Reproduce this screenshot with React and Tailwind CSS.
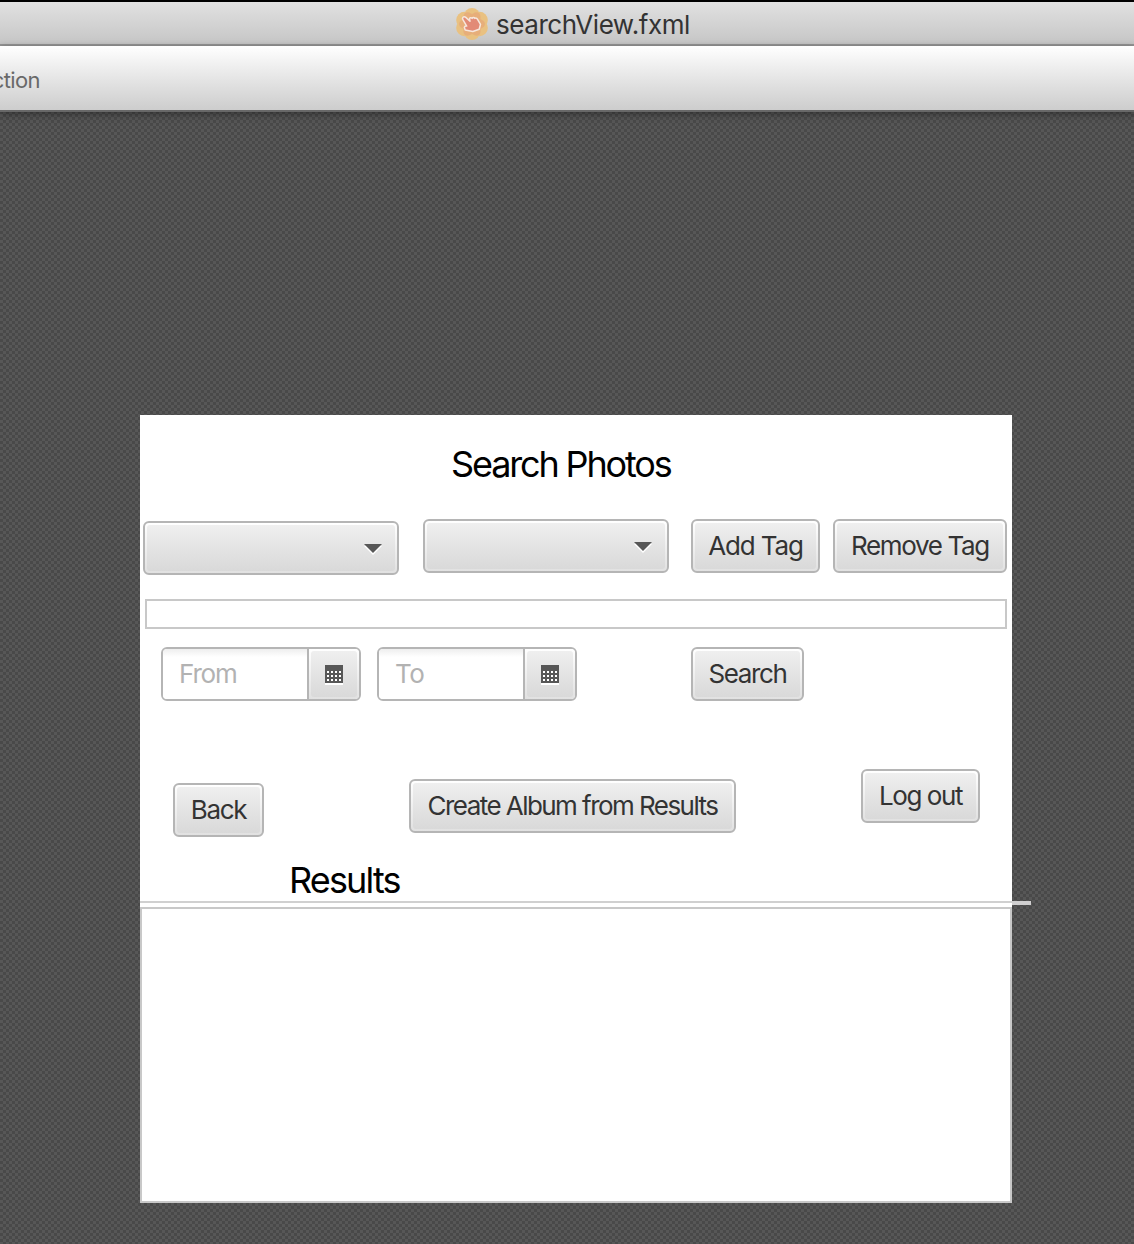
const face =
  "h-full w-full rounded-[3px] bg-linear-to-b from-[#efefef] to-[#d9d9d9] flex items-center";
const shell =
  "shrink-0 border-2 border-[#b5b5b5] bg-linear-to-b from-white to-[#e1e1e1] p-0.5";

function Button({ className, textClass, children }) {
  return (
    <button className={`${shell} block h-[54px] rounded-md ${className}`}>
      <span className={`${face} justify-center whitespace-nowrap text-[26px] leading-8 font-[430] text-[#333]`}>
        <span className={textClass}>{children}</span>
      </span>
    </button>
  );
}

function Combo({ className }) {
  return (
    <div className={`${shell} h-[54px] rounded-md ${className}`}>
      <div className={`${face} justify-end pr-[13px] pt-0.5`}>
        <svg width="18" height="11" viewBox="0 0 18 11">
          <path d="M0 2H18L9 11Z" fill="#fff" />
          <path d="M0 0H18L9 9Z" fill="#575757" />
        </svg>
      </div>
    </div>
  );
}

function CalendarIcon() {
  return (
    <svg width="18" height="20" viewBox="0 0 18 20" shapeRendering="crispEdges">
      <path d="M0 18H18V20H0Z" fill="#fff" />
      <path d="M0 0H18V18H0Z" fill="#575757" />
      {[6, 10, 14].map((y) =>
        [2, 6, 10, 14].map((x) => <rect key={`${x}-${y}`} x={x} y={y} width="2" height="2" fill="#fff" />)
      )}
    </svg>
  );
}

function DateField({ className, textClass, label }) {
  return (
    <div className={`flex h-[54px] w-[200px] shrink-0 overflow-hidden rounded-md border-2 border-[#b5b5b5] bg-white ${className}`}>
      <div className="flex w-[144px] items-center bg-linear-to-b from-[#eeeeee] to-white to-[8px] pl-4 text-[26px] leading-8 text-[#b2b2b2]">
        <span className={textClass}>{label}</span>
      </div>
      <div className="h-full w-[52px] border-l-2 border-[#b5b5b5] bg-linear-to-b from-white to-[#e1e1e1] p-0.5">
        <div className={`${face} justify-center pt-px`}>
          <CalendarIcon />
        </div>
      </div>
    </div>
  );
}

function FileIcon() {
  return (
    <svg width="32" height="32" viewBox="0 0 32 32" className="shrink-0">
      <g fill="#e9c181">
        <circle cx="16" cy="8" r="8" />
        <circle cx="23.5" cy="12" r="8.3" />
        <circle cx="23.5" cy="20" r="8.3" />
        <circle cx="16" cy="24" r="8" />
        <circle cx="8.5" cy="20" r="8.3" />
        <circle cx="8.5" cy="12" r="8.3" />
      </g>
      <g fill="#e7a377" opacity=".6">
        <ellipse cx="16" cy="16" rx="6.5" ry="13" transform="rotate(30 16 16)" />
        <ellipse cx="16" cy="16" rx="6.5" ry="13" transform="rotate(90 16 16)" />
        <ellipse cx="16" cy="16" rx="6.5" ry="13" transform="rotate(150 16 16)" />
      </g>
      <path
        d="M6.9 9.4c.8-1 2-.8 2.9 0l4.2 3.8-.5-2.3c.2-1.2 1.8-1.5 2.6-.5.6-1.1 2.1-1 2.7 0 1-.6 2.2-.2 2.6.8l3.1 5.1-1.3 5-6.4 2.2-7.6-1.6-.9-2.6c.2-1 1-1.3 2.4-1.2L6.9 11.7c-.5-.8-.6-1.5 0-2.3Z"
        fill="#e28a76"
        stroke="#f6e7de"
        strokeWidth="1.5"
        strokeLinejoin="round"
      />
    </svg>
  );
}

export default function App() {
  return (
    <div className="h-[1244px] w-[1134px] overflow-hidden bg-[#505050] bg-[repeating-conic-gradient(#494949_0_25%,#575757_0_50%)] bg-[length:6px_6px] font-['Inter','Liberation_Sans',sans-serif]">
      <header className="flex h-[46px] items-center border-t-2 border-b-2 border-t-black border-b-[#969696] bg-linear-to-b from-[#e1e1e1] to-[#c6c6c6] pl-[456px] pt-0.5">
        <FileIcon />
        <h1 className="ml-2 pt-0.5 text-[26px] leading-8 font-[430] tracking-[-0.45px] text-[#333]">searchView.fxml</h1>
      </header>
      <nav className="flex h-[66px] items-center overflow-hidden border-b-2 border-[#686868] bg-linear-to-b from-white to-[#cdcdcd] pt-1 shadow-[0_2px_8px_rgba(0,0,0,0.4)]">
        <span className="flex w-10 justify-end text-[22px] leading-7 font-[430] tracking-[-0.6px] text-[#696969]">ction</span>
      </nav>

      <main className="ml-[140px] mt-[303px] h-[788px] w-[872px] bg-white">
        <h2 className="h-[104px] pl-[311px] pt-[27px] text-[36px] leading-[44px] font-[430] tracking-[-2.15px] text-black">Search Photos</h2>
        <div className="flex pl-[3px]">
          <Combo className="mt-0.5 w-[256px]" />
          <Combo className="ml-6 w-[246px]" />
          <Button className="ml-[22px] w-[129px]" textClass="tracking-[-1.15px]">Add Tag</Button>
          <Button className="ml-[13px] w-[174px]" textClass="tracking-[-1.35px]">Remove Tag</Button>
        </div>
        <div className="ml-[5px] mt-6 h-[30px] w-[862px] border-2 border-[#c8c8c8]" />
        <div className="mt-[18px] flex pl-[21px]">
          <DateField label="From" textClass="tracking-[-1.2px]" />
          <DateField label="To" className="ml-4" textClass="tracking-[-0.5px]" />
          <Button className="ml-[114px] w-[113px]" textClass="tracking-[-1.4px]">Search</Button>
        </div>
        <div className="mt-[68px] flex h-[68px] items-start pl-[33px]">
          <Button className="mt-[14px] w-[91px]" textClass="tracking-[-1.3px]">Back</Button>
          <Button className="ml-[145px] mt-[10px] w-[327px]" textClass="tracking-[-1.55px]">Create Album from Results</Button>
          <Button className="ml-[125px] w-[119px]" textClass="tracking-[-1.4px]">Log out</Button>
        </div>
        <h2 className="h-16 pl-[149px] pt-[21px] text-[36px] leading-[44px] font-[430] tracking-[-1.85px] text-black">Results</h2>
        <div className="flex h-1.5 w-[891px] items-start">
          <div className="h-0.5 w-[872px] bg-[#d0d0d0]" />
          <div className="h-1 w-[19px] bg-[#d0cfd0]" />
        </div>
        <div className="h-[296px] border-2 border-[#c8c8c8] bg-white" />
      </main>
    </div>
  );
}
